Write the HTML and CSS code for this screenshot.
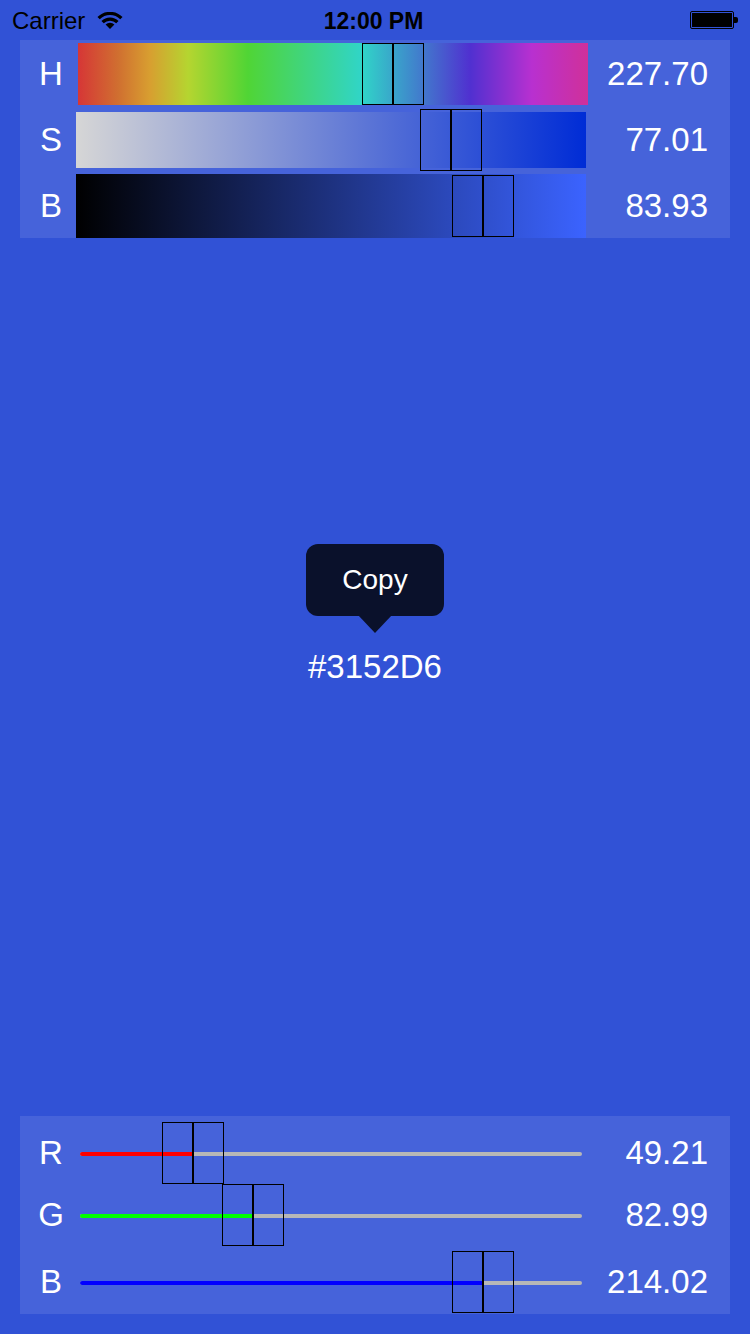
FILE: index.html
```html
<!DOCTYPE html>
<html>
<head>
<meta charset="utf-8">
<title>Color Picker</title>
<link rel="stylesheet" href="styles.css">
</head>
<body>
<div class="screen">
  <header class="status">
    <div class="status-left">
      <span class="carrier">Carrier</span>
      <svg class="wifi" width="26" height="17" viewBox="0 0 26 17">
        <path d="M1.6 6.2 A16 16 0 0 1 24.4 6.2" fill="none" stroke="#000" stroke-width="3.2"/>
        <path d="M5.6 10.2 A10.4 10.4 0 0 1 20.4 10.2" fill="none" stroke="#000" stroke-width="3.2"/>
        <path d="M13 17 L8.6 12.6 A6.2 6.2 0 0 1 17.4 12.6 Z" fill="#000"/>
      </svg>
    </div>
    <div class="time">12:00 PM</div>
    <div class="status-right">
      <div class="battery"><div class="battery-fill"></div></div>
      <div class="battery-nub"></div>
    </div>
  </header>

  <section class="panel hsb">
    <div class="hrow row-h">
      <span class="label">H</span>
      <div class="bar bar-h"><div class="thumb" style="left:284px"></div></div>
      <span class="value">227.70</span>
    </div>
    <div class="hrow row-s">
      <span class="label">S</span>
      <div class="bar bar-s"><div class="thumb" style="left:344px"></div></div>
      <span class="value">77.01</span>
    </div>
    <div class="hrow row-b">
      <span class="label">B</span>
      <div class="bar bar-b"><div class="thumb" style="left:376px"></div></div>
      <span class="value">83.93</span>
    </div>
  </section>

  <main class="center">
    <div class="tooltip">Copy</div>
    <div class="hex">#3152D6</div>
  </main>

  <section class="panel rgb">
    <div class="crow row-r">
      <span class="clabel">R</span>
      <div class="track-wrap">
        <div class="track"><div class="fill fill-r" style="width:113px"></div></div>
        <div class="thumb" style="left:82px"></div>
      </div>
      <span class="cvalue">49.21</span>
    </div>
    <div class="crow row-g">
      <span class="clabel">G</span>
      <div class="track-wrap">
        <div class="track"><div class="fill fill-g" style="width:173px"></div></div>
        <div class="thumb" style="left:142px"></div>
      </div>
      <span class="cvalue">82.99</span>
    </div>
    <div class="crow row-bl">
      <span class="clabel">B</span>
      <div class="track-wrap">
        <div class="track"><div class="fill fill-b" style="width:403px"></div></div>
        <div class="thumb" style="left:372px"></div>
      </div>
      <span class="cvalue">214.02</span>
    </div>
  </section>
</div>
</body>
</html>
```

FILE: styles.css
```css
* { box-sizing: border-box; }
html, body {
  margin: 0;
  padding: 0;
  background: #3152D6;
}
body {
  font-family: "Liberation Sans", Arial, Helvetica, sans-serif;
  color: #fff;
}
.screen {
  width: 750px;
  height: 1334px;
  display: flex;
  flex-direction: column;
  background: #3152D6;
  overflow: hidden;
}

/* status bar */
.status {
  height: 40px;
  flex: none;
  display: grid;
  grid-template-columns: 1fr auto 1fr;
  align-items: center;
  color: #000;
  padding-top: 2px;
}
.status-left {
  display: flex;
  align-items: center;
  padding-left: 12px;
  gap: 12px;
}
.carrier {
  font-size: 24px;
  line-height: 24px;
}
.wifi { display: block; margin-top: -2px; }
.time {
  font-size: 23px;
  font-weight: bold;
  line-height: 24px;
  margin-left: -3px;
}
.status-right {
  display: flex;
  justify-content: flex-end;
  align-items: center;
  padding-right: 12px;
}
.battery {
  width: 44px;
  height: 18px;
  border: 1px solid #000;
  border-radius: 2px;
  padding: 1px;
  margin-top: -2px;
}
.battery-fill {
  width: 100%;
  height: 100%;
  background: #000;
}
.battery-nub {
  width: 4px;
  height: 6px;
  background: #000;
  border-radius: 0 2px 2px 0;
  margin-top: -2px;
}

/* panels */
.panel {
  margin: 0 20px;
  background: #4663DA;
  flex: none;
}
.hsb {
  padding-top: 3px;
  display: flex;
  flex-direction: column;
}
.hrow {
  display: flex;
  align-items: center;
}
.row-h { height: 62px; }
.row-s { height: 56px; margin-top: 7px; }
.row-b { height: 64px; margin-top: 6px; }

.label, .clabel {
  font-size: 33px;
  text-align: center;
  flex: none;
}
.label {
  width: 56px;
  padding-left: 6px;
}
.value, .cvalue {
  flex: 1;
  font-size: 33px;
  text-align: right;
}
.value { padding-right: 22px; }

.bar {
  position: relative;
  width: 510px;
  height: 100%;
  flex: none;
}
.bar-h {
  margin-left: 2px;
  background: linear-gradient(to right,
    #D63636 0%,
    #D07030 8%,
    #D89E30 14%,
    #B5D530 21.6%,
    #50D535 33.3%,
    #30D5C8 55.7%,
    #5030D0 76.9%,
    #B830D0 89%,
    #D0309A 100%);
}
.bar-s {
  background: linear-gradient(to right, #D6D6D6, #002CD6);
}
.bar-b {
  background: linear-gradient(to right, #000000, #3B63FF);
}

.thumb {
  position: absolute;
  top: 50%;
  margin-top: -31px;
  width: 62px;
  height: 62px;
  border: 1px solid #000;
}
.thumb::after {
  content: "";
  position: absolute;
  left: 29px;
  top: 0;
  width: 2px;
  height: 100%;
  background: #000;
}

/* center */
.center {
  flex: 1;
  display: flex;
  flex-direction: column;
  align-items: center;
  padding-top: 306px;
}
.tooltip {
  position: relative;
  width: 138px;
  height: 72px;
  border-radius: 12px;
  background: #0A112B;
  display: flex;
  align-items: center;
  justify-content: center;
  font-size: 28px;
}
.tooltip::after {
  content: "";
  position: absolute;
  left: 52px;
  top: 71px;
  border-left: 17px solid transparent;
  border-right: 17px solid transparent;
  border-top: 18px solid #0A112B;
}
.hex {
  margin-top: 32px;
  font-size: 33px;
  line-height: 38px;
}

/* rgb panel */
.rgb {
  margin-bottom: 20px;
  padding: 6px 0 1px;
  display: flex;
  flex-direction: column;
}
.crow {
  height: 62px;
  display: flex;
  align-items: center;
}
.row-bl { margin-top: 5px; }
.clabel {
  width: 60px;
  padding-left: 2px;
}
.cvalue { padding-right: 22px; }
.track-wrap {
  position: relative;
  width: 502px;
  height: 100%;
  flex: none;
  display: flex;
  align-items: center;
  padding-top: 1px;
}
.track {
  width: 100%;
  height: 4px;
  border-radius: 2px;
  background: #B7B7B7;
  overflow: hidden;
}
.fill { height: 100%; }
.fill-r { background: #FF0000; }
.fill-g { background: #00FF00; }
.fill-b { background: #0000FF; }
```
